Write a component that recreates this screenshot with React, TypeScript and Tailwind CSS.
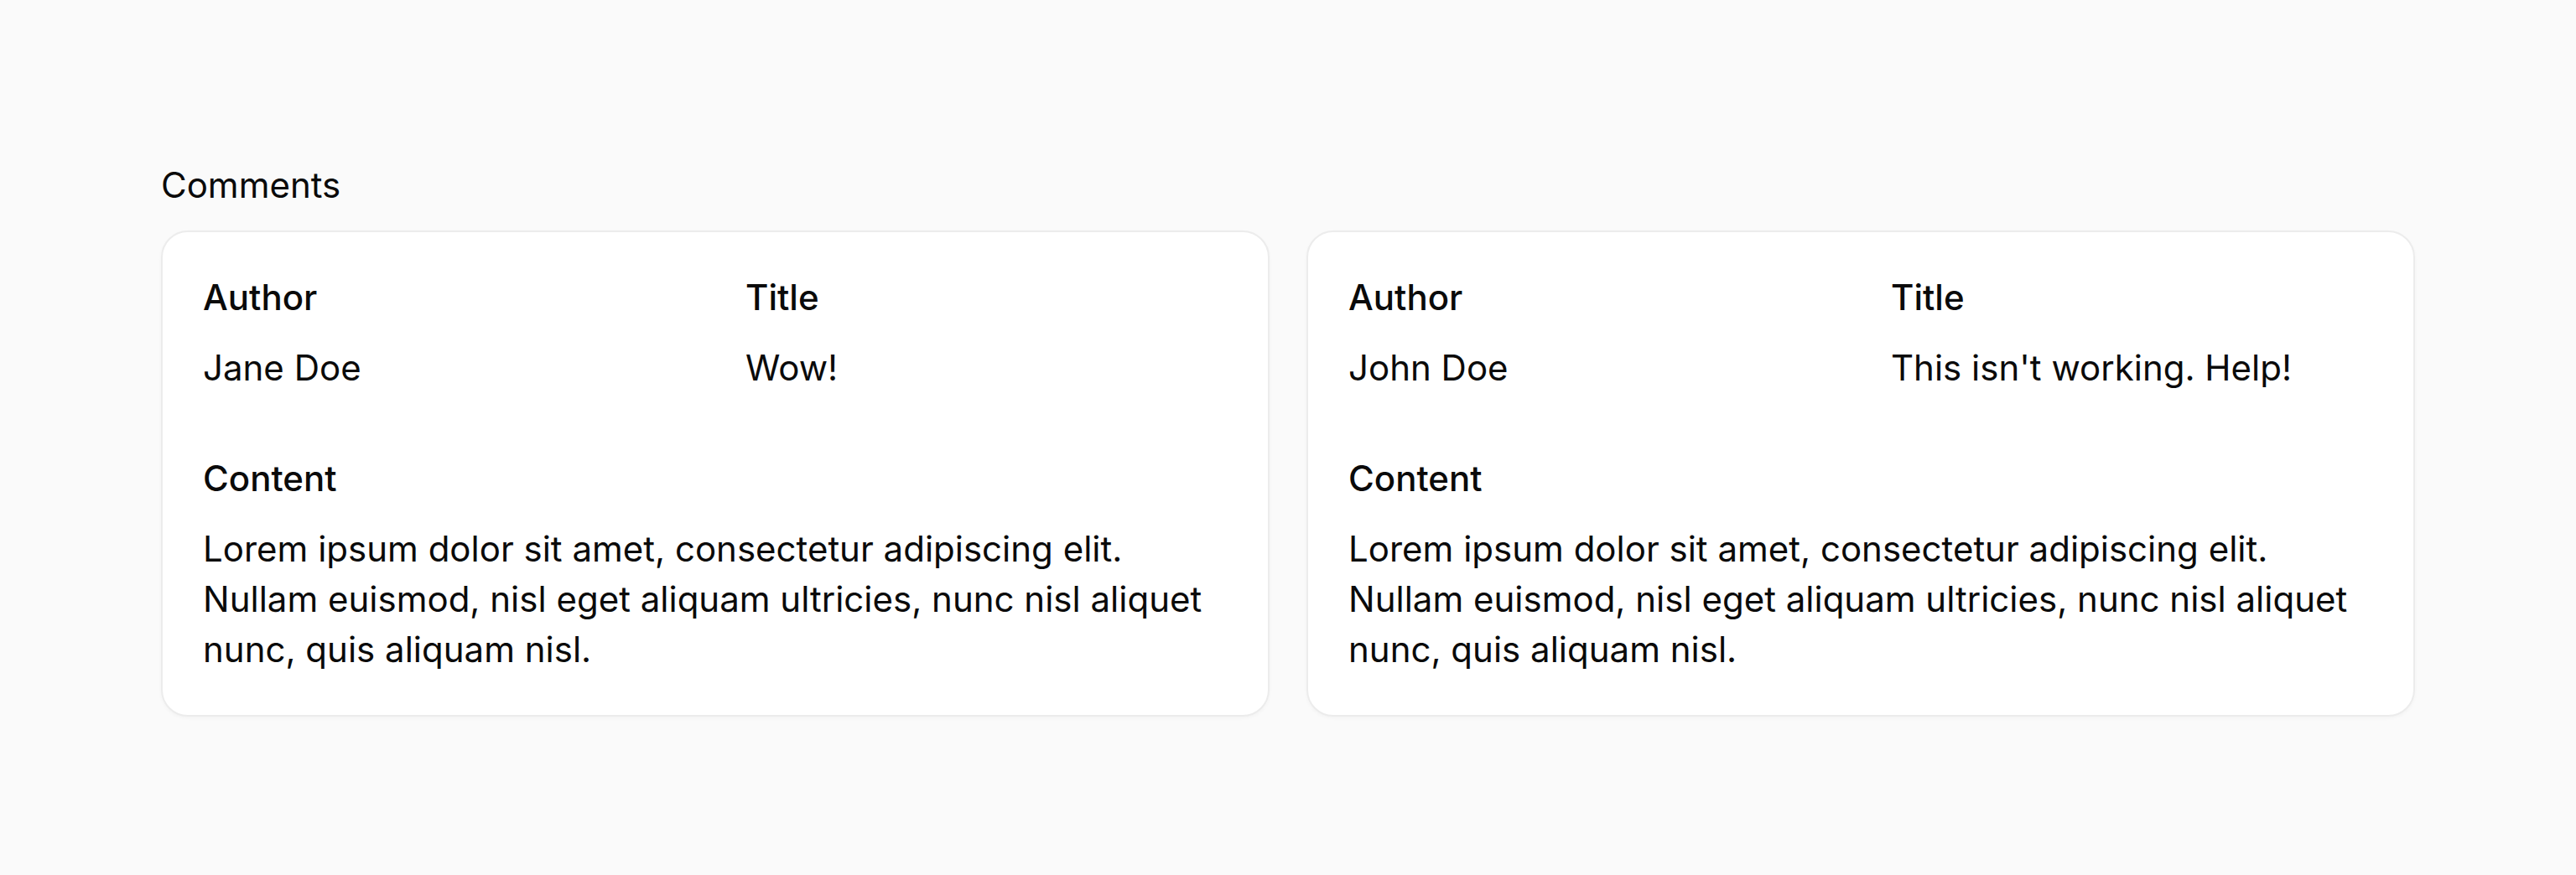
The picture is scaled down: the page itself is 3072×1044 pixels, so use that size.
const comments = [
  {
    author: "Jane Doe",
    title: "Wow!",
    content:
      "Lorem ipsum dolor sit amet, consectetur adipiscing elit. Nullam euismod, nisl eget aliquam ultricies, nunc nisl aliquet nunc, quis aliquam nisl.",
  },
  {
    author: "John Doe",
    title: "This isn't working. Help!",
    content:
      "Lorem ipsum dolor sit amet, consectetur adipiscing elit. Nullam euismod, nisl eget aliquam ultricies, nunc nisl aliquet nunc, quis aliquam nisl.",
  },
];

export default function App() {
  return (
    <div
      className="min-h-[1044px] w-full bg-[#fafafa] text-[#0a0a0a] px-[192px] pt-[191px]"
      style={{ fontFamily: "Inter, 'Noto Sans', sans-serif" }}
    >
      <h2 className="text-[42px] leading-[60px] font-normal mb-6">Comments</h2>
      <div className="grid grid-cols-2 gap-[44px]">
        {comments.map((c) => (
          <div
            key={c.author}
            className="bg-white rounded-[32px] border-2 border-[#ececec] shadow-[0_2px_4px_rgba(0,0,0,0.03)] p-12"
          >
            <div className="grid grid-cols-2 gap-[72px] text-[42px] leading-[60px]">
              <div className="flex flex-col gap-6">
                <div className="font-medium">Author</div>
                <div>{c.author}</div>
              </div>
              <div className="flex flex-col gap-6">
                <div className="font-medium">Title</div>
                <div>{c.title}</div>
              </div>
              <div className="col-span-2 flex flex-col gap-6">
                <div className="font-medium">Content</div>
                <p>{c.content}</p>
              </div>
            </div>
          </div>
        ))}
      </div>
    </div>
  );
}
